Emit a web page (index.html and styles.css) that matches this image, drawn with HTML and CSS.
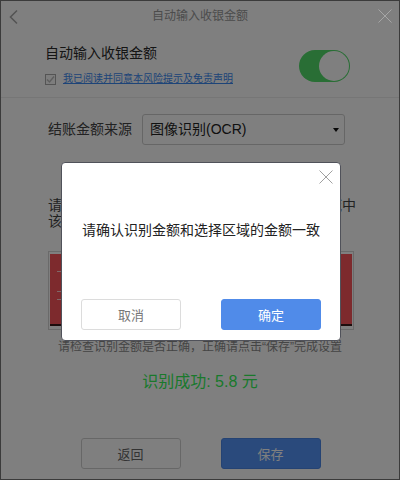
FILE: index.html
```html
<!DOCTYPE html>
<html lang="zh-CN">
<head>
<meta charset="utf-8">
<title>自动输入收银金额</title>
<link rel="stylesheet" href="styles.css">
</head>
<body>
<div class="window">
  <header class="titlebar">
    <svg class="back" width="10" height="16" viewBox="0 0 10 16"><path d="M8 1.5 L1.5 8 L8 14.5" fill="none" stroke="#a8a8a8" stroke-width="1.6"/></svg>
    <div class="title">自动输入收银金额</div>
  </header>

  <section class="switch-row">
    <div class="switch-text">
      <div class="heading">自动输入收银金额</div>
      <label class="agree">
        <span class="checkbox"><svg width="9" height="9" viewBox="0 0 9 9"><path d="M1 4.5 L3.5 7 L8 1.5" fill="none" stroke="#bdbdbd" stroke-width="1.4"/></svg></span>
        <a class="agree-link">我已阅读并同意本风险提示及免责声明</a>
      </label>
    </div>
    <div class="toggle"><span class="knob"></span></div>
  </section>

  <section class="source-row">
    <span class="label">结账金额来源</span>
    <div class="select">图像识别(OCR)<span class="caret"></span></div>
  </section>

  <p class="instruction">请打开收银软件，将金额区域拖入下方框选区域中<br>该区域将用于识别结账金额</p>

  <div class="preview">
    <div class="shot">
      <span class="mark m1"></span>
      <span class="mark m2"></span>
      <span class="mark m3"></span>
    </div>
  </div>

  <p class="hint">请检查识别金额是否正确，正确请点击“保存”完成设置</p>
  <p class="result">识别成功: 5.8 元</p>

  <div class="actions">
    <button class="btn">返回</button>
    <button class="btn primary">保存</button>
  </div>
</div>

<div class="overlay"></div>

<svg class="win-close" width="14" height="14" viewBox="0 0 14 14"><path d="M0.5 0.5 L13.5 13.5 M13.5 0.5 L0.5 13.5" stroke="#a6a6a6" stroke-width="1"/></svg>

<div class="modal">
  <svg class="modal-close" width="14" height="14" viewBox="0 0 14 14"><path d="M0.5 0.5 L13.5 13.5 M13.5 0.5 L0.5 13.5" stroke="#a0a0a0" stroke-width="1"/></svg>
  <p class="modal-text">请确认识别金额和选择区域的金额一致</p>
  <div class="modal-actions">
    <button class="btn">取消</button>
    <button class="btn confirm">确定</button>
  </div>
</div>
</body>
</html>
```

FILE: styles.css
```css
* { box-sizing: border-box; }

html, body {
  margin: 0;
  padding: 0;
  width: 400px;
  height: 480px;
  overflow: hidden;
  background: #fff;
  font-family: "Liberation Sans", "Noto Sans CJK SC", sans-serif;
}

.window {
  width: 400px;
  height: 480px;
  border: 1px solid #767676;
  background: #fff;
  display: flex;
  flex-direction: column;
}

/* title bar */
.titlebar {
  height: 31px;
  display: flex;
  align-items: center;
  position: relative;
  flex: none;
}
.back {
  position: absolute;
  left: 8px;
  top: 8px;
}
.title {
  width: 100%;
  text-align: center;
  font-size: 12px;
  line-height: 31px;
  color: #989898;
  margin-top: -1px;
}

/* switch row */
.switch-row {
  height: 66px;
  flex: none;
  display: flex;
  justify-content: space-between;
  align-items: flex-start;
  padding: 11px 49px 0 44px;
  border-bottom: 1px solid #ececec;
}
.heading {
  font-size: 14px;
  line-height: 20px;
  color: #2a2a2a;
}
.agree {
  display: flex;
  align-items: center;
  margin-top: 8px;
  height: 16px;
}
.checkbox {
  width: 11px;
  height: 11px;
  border: 1px solid #a8a8a8;
  background: #fafafa;
  display: flex;
  align-items: center;
  justify-content: center;
  margin-right: 7px;
}
.agree-link {
  font-size: 10px;
  line-height: 14px;
  color: #3a88f0;
  text-decoration: underline;
}
.toggle {
  width: 51px;
  height: 32px;
  border-radius: 16px;
  background: #52dc6a;
  margin-top: 7px;
  position: relative;
}
.knob {
  position: absolute;
  right: 1px;
  top: 1px;
  width: 30px;
  height: 30px;
  border-radius: 50%;
  background: #fff;
}

/* source row */
.source-row {
  display: flex;
  align-items: center;
  padding: 16px 0 0 47px;
  flex: none;
}
.label {
  font-size: 14px;
  color: #444;
  width: 94px;
  line-height: 31px;
}
.select {
  width: 203px;
  height: 31px;
  border: 1px solid #cdcdcd;
  border-radius: 3px;
  font-size: 14px;
  line-height: 29px;
  color: #222;
  padding-left: 7px;
  position: relative;
}
.caret {
  position: absolute;
  right: 5px;
  top: 13px;
  width: 0;
  height: 0;
  border-left: 3px solid transparent;
  border-right: 3px solid transparent;
  border-top: 4px solid #111;
}

.instruction {
  margin: 52px 0 0 47px;
  width: 312px;
  font-size: 14px;
  line-height: 16px;
  color: #444;
}

.preview {
  margin: 22px 0 0 47px;
  width: 306px;
  height: 79px;
  border: 1px solid #d4d4d4;
  padding: 2px 1px 3px 1px;
}
.shot {
  height: 100%;
  background: #fa545b;
  border-bottom: 2px solid #3a1a1a;
  position: relative;
}
.mark {
  position: absolute;
  left: 7px;
  width: 4px;
  height: 1px;
  background: #ffd0d0;
}
.m1 { top: 17px; }
.m2 { top: 37px; }
.m3 { top: 45px; }

.hint {
  margin: 9px 0 0 0;
  text-align: center;
  font-size: 12px;
  line-height: 16px;
  color: #8a8a8a;
}
.result {
  margin: 16px 0 0 0;
  text-align: center;
  font-size: 16px;
  line-height: 22px;
  color: #34f258;
}

.actions {
  margin-top: 45px;
  display: flex;
  justify-content: center;
  gap: 40px;
  padding-left: 1px;
}
.btn {
  width: 100px;
  height: 31px;
  border: 1px solid #cfcfcf;
  border-radius: 3px;
  background: #fff;
  font-family: "Liberation Sans", "Noto Sans CJK SC", sans-serif;
  font-size: 13px;
  color: #666;
  padding: 0;
}
.primary {
  background: #5494f8;
  border-color: #4a86e6;
  color: #fff;
}

/* overlay + dialog */
.overlay {
  position: fixed;
  inset: 0;
  background: rgba(0, 0, 0, 0.5);
  z-index: 2;
}
.win-close {
  position: fixed;
  left: 378px;
  top: 9px;
  z-index: 3;
}
.modal {
  position: fixed;
  left: 61px;
  top: 162px;
  width: 280px;
  height: 179px;
  background: #fff;
  border: 1px solid #50525a;
  border-radius: 4px;
  z-index: 3;
  display: flex;
  flex-direction: column;
  padding: 0 19px 10px 19px;
}
.modal-close {
  position: absolute;
  right: 7px;
  top: 7px;
}
.modal-text {
  margin: 58px 0 0 1px;
  font-size: 14px;
  line-height: 18px;
  color: #222;
}
.modal-actions {
  margin-top: auto;
  display: flex;
  justify-content: space-between;
}
.modal-actions .btn {
  color: #777;
  border-color: #dcdcdc;
}
.modal-actions .confirm {
  background: #508be9;
  border-color: #508be9;
  color: #fff;
}
```
